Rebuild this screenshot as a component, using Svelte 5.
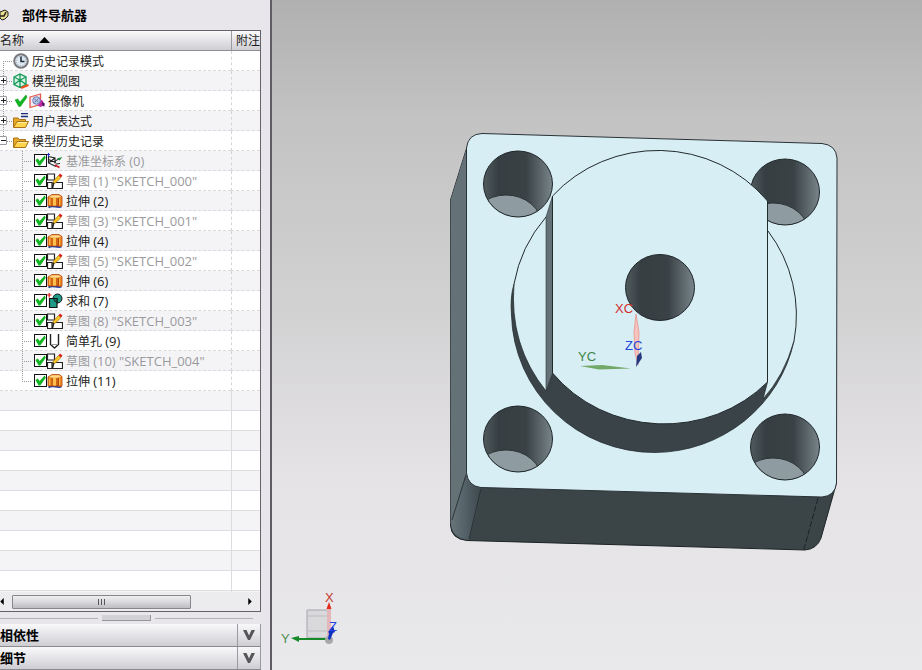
<script lang="ts">
  type Kind = "clock" | "views" | "camera" | "expressions" | "folder" | "datum" | "sketch" | "extrude" | "unite" | "hole";

  type Feature = { name: string; suffix: string; icon: Kind; dim?: boolean; checked: boolean };

  const HOLES = [
    { x: 518, y: 184 },
    { x: 785, y: 192 },
    { x: 518, y: 439 },
    { x: 785, y: 447 },
  ];

  let open = $state(true);
  let features: Feature[] = $state([
    { name: "基准坐标系", suffix: "(0)", icon: "datum", dim: true, checked: true },
    { name: "草图", suffix: '(1) "SKETCH_000"', icon: "sketch", dim: true, checked: true },
    { name: "拉伸", suffix: "(2)", icon: "extrude", checked: true },
    { name: "草图", suffix: '(3) "SKETCH_001"', icon: "sketch", dim: true, checked: true },
    { name: "拉伸", suffix: "(4)", icon: "extrude", checked: true },
    { name: "草图", suffix: '(5) "SKETCH_002"', icon: "sketch", dim: true, checked: true },
    { name: "拉伸", suffix: "(6)", icon: "extrude", checked: true },
    { name: "求和", suffix: "(7)", icon: "unite", checked: true },
    { name: "草图", suffix: '(8) "SKETCH_003"', icon: "sketch", dim: true, checked: true },
    { name: "简单孔", suffix: "(9)", icon: "hole", checked: true },
    { name: "草图", suffix: '(10) "SKETCH_004"', icon: "sketch", dim: true, checked: true },
    { name: "拉伸", suffix: "(11)", icon: "extrude", checked: true },
  ]);

  const roots: { name: string; icon: Kind; expander?: boolean; active?: boolean }[] = [
    { name: "历史记录模式", icon: "clock" },
    { name: "模型视图", icon: "views", expander: true },
    { name: "摄像机", icon: "camera", expander: true, active: true },
    { name: "用户表达式", icon: "expressions", expander: true },
  ];
</script>

{#snippet icon(kind: Kind)}
  <svg class="icon" viewBox="0 0 16 16" aria-hidden="true">
    {#if kind === "clock"}
      <circle cx="8" cy="8" r="6.800" fill="#dfe9f2" stroke="#77777c" stroke-width="2" />
      <circle cx="8" cy="8" r="4.800" fill="none" stroke="#8f9aa5" stroke-dasharray="1 1.5" />
      <path d="M8 3.500v5h3.500" fill="none" stroke="#1c2a3a" stroke-width="1.500" />
    {:else if kind === "views"}
      <path d="M1 4 7 1l6 3v7.500l-6 3-6-3z M1 4l6 3 6-3 M7 1v13.500 M1 11.500l6-4.500 6 4.500" fill="#d4f2e2" stroke="#159a58" stroke-width="1.300" />
      <path d="M8 15l7.500-3" stroke="#f0501c" stroke-width="2" />
    {:else if kind === "camera"}
      <path d="M1 4 11.500 1v10.500L1 14.500z" fill="#f6e8f0" stroke="#e25a4c" stroke-width="1.300" />
      <path d="M11 6l3 2 1 3.500-3 2.500-3-1z" fill="#c02aa4" />
      <path d="M13 9l2.800 1.500-.5 3-1.800-.5z" fill="#4a1a60" />
      <circle cx="7.500" cy="7.500" r="3.800" fill="#b6c6e6" stroke="#7080b4" />
      <path d="M5.500 6l4 3M9.500 5.500l-4 4" stroke="#6c78b0" />
    {:else if kind === "expressions" || kind === "folder"}
      <path d="M.5 14V5H5l1.500 1.500h6V9" fill="#e7a92a" stroke="#a9721a" />
      <path d="M.5 14.500 4 8.500h11.500l-3 6z" fill="#ffd44c" stroke="#a9721a" />
      <path d="M5 9.500h9" stroke="#fff0a8" />
      {#if kind === "expressions"}
        <path d="M8 .5h7M8 3.500h7" stroke="#1d2c78" stroke-width="1.300" />
      {/if}
    {:else if kind === "datum"}
      <path d="M1.500 1v9l7.500 3.500M1.500 3.500 8 5v5.500M1.500 10 8 5M1.500 6.500l7.500 3" fill="none" stroke="#222" stroke-width="1.100" />
      <path d="M8 8l4-2" stroke="#222" />
      <path d="M10 5.500 15.500 4l-3 3.500z" fill="#128a36" />
      <path d="M9 11l4-.5" stroke="#222" />
      <path d="M8 12l4.500 2.500" stroke="#cc1c1c" stroke-width="1.800" />
      <path d="M0 1.500h3M1.500 0v4" stroke="#2030c8" />
    {:else if kind === "sketch"}
      <path d="M.5 1h7v6h-7zM.5 9.500h4.500v6H.5zM7 9.500h8.500v6H5.500z" fill="#fff" stroke="#222" stroke-width="1.200" />
      <path d="M5.500 11 6.500 8 11.500 2.500l2.500 2L8.500 10z" fill="#ffc81e" stroke="#8a5a10" stroke-width=".6" />
      <path d="M11.500 2.500 13 .500l2.500 2L14 4.500z" fill="#d8201c" />
      <path d="M5 11.500l.8-2.500 1.700 1.500z" fill="#222" />
    {:else if kind === "extrude"}
      <path d="M1.500 14.500c4-3 9 1 13-1" fill="none" stroke="#1c3fa8" stroke-width="1.800" />
      <path d="M1 4 5 1.500h7l3 2V13l-3.500.5V4.500v8l-1.500.5H5.500L1 13z" fill="#f08a20" stroke="#b0440c" stroke-width=".8" />
      <path d="M5 4v9M10 4.500V13" stroke="#b0440c" />
      <path d="M6 5h3v7.500H6z" fill="#ffc050" />
      <path d="M2 4 5 2.200h7l2 1.500-3 1H5z" fill="#ffd98a" />
      <path d="M2.500 6v6M12.500 5.500V12" stroke="#ffb648" />
    {:else if kind === "unite"}
      <circle cx="10.500" cy="5.500" r="4.500" fill="#1f9c88" stroke="#111" />
      <path d="M2.500 5.500H10v9H2.500z" fill="#1f9c88" stroke="#111" stroke-width="1.200" />
      <path d="M6.500 5.500H10v4a4.500 4.500 0 0 1-3.500-4z" fill="#157465" stroke="#111" stroke-width=".8" />
      <path d="M0 2h4.500M2.200 0v4.500" stroke="#e01818" stroke-width="1.200" />
    {:else}
      <path d="M3.500 1v10.500L7.500 15l4-3.500V1" fill="none" stroke="#222" stroke-width="1.400" />
      <path d="M4 11.500h7" stroke="#999" />
    {/if}
  </svg>
{/snippet}

{#snippet tick()}
  <svg class="tick" viewBox="0 0 12 12" aria-hidden="true">
    <path d="M.5 5.500 3 4.500 5 7.500 10.500 1l1 2L5.500 11.500H4z" fill="#12b424" stroke="#12a422" stroke-width=".6" />
  </svg>
{/snippet}

<main>
  <aside>
    <h1>
      <svg class="pin" viewBox="0 0 9 12" aria-hidden="true">
        <path d="M0 3l5-2 3 2v4l-3 3-3 1-2-2z" fill="#e8dc8c" stroke="#222" />
        <path d="M0 7h4l2-4" fill="none" stroke="#222" stroke-width="1.500" />
      </svg>
      部件导航器
    </h1>

    <div class="tree">
      <table>
        <thead>
          <tr>
            <th class="name">
              名称
              <svg class="sort" viewBox="0 0 11 6" aria-hidden="true"><path d="M5.500 0 11 6H0z" /></svg>
            </th>
            <th class="note">附注</th>
          </tr>
        </thead>
        <tbody>
          {#each roots as item}
            <tr>
              <td>
                <div class="node root">
                  <span class="branch">
                    {#if item.expander}
                      <button class="expander" aria-label="展开 {item.name}">
                        <svg viewBox="0 0 7 7"><path d="M1 3.500h5M3.500 1v5" /></svg>
                      </button>
                    {/if}
                  </span>
                  {#if item.active}{@render tick()}{/if}
                  {@render icon(item.icon)}
                  <span class="label">{item.name}</span>
                </div>
              </td>
              <td></td>
            </tr>
          {/each}
          <tr>
            <td>
              <div class="node root last">
                <span class="branch">
                  <button class="expander" aria-label="模型历史记录" aria-expanded={open} onclick={() => (open = !open)}>
                    <svg viewBox="0 0 7 7"><path d={open ? "M1 3.500h5" : "M1 3.500h5M3.500 1v5"} /></svg>
                  </button>
                </span>
                {@render icon("folder")}
                <span class="label">模型历史记录</span>
              </div>
            </td>
            <td></td>
          </tr>
          {#if open}
            {#each features as feature, i}
              <tr>
                <td>
                  <label class="node child" class:last={i === features.length - 1} class:dim={feature.dim}>
                    <span class="branch"></span>
                    <input type="checkbox" bind:checked={feature.checked} />
                    {@render icon(feature.icon)}
                    <span class="label">{feature.name} <span class="suffix">{feature.suffix}</span></span>
                  </label>
                </td>
                <td></td>
              </tr>
            {/each}
          {/if}
        </tbody>
      </table>

      <div class="filler"></div>

      <div class="scrollbar">
        <button aria-label="向左滚动"><svg viewBox="0 0 4 8"><path d="M4 0v8L0 4z" /></svg></button>
        <div class="track"><div class="thumb"><i></i><i></i><i></i></div></div>
        <button aria-label="向右滚动"><svg viewBox="0 0 4 8"><path d="M0 0v8l4-4z" /></svg></button>
      </div>
    </div>

    <div class="splitter"><span></span><b></b><span></span></div>

    {#each ["相依性", "细节"] as title}
      <button class="section">
        <span class="title">{title}</span>
        <span class="arrow">
          <svg viewBox="0 0 12 10" aria-hidden="true"><path d="M0 0h3.500L6 5.500 8.500 0H12L7 10H5z" /></svg>
        </span>
      </button>
    {/each}
  </aside>

  <section class="viewport">
    <svg viewBox="272 0 650 670" role="img" aria-label="零件模型">
      <defs>
        <linearGradient id="bore">
          <stop offset="0" stop-color="#505b5e" />
          <stop offset=".22" stop-color="#363e42" />
          <stop offset=".62" stop-color="#3a4246" />
          <stop offset="1" stop-color="#78858a" />
        </linearGradient>
        <linearGradient id="corner">
          <stop offset="0" stop-color="#68757a" />
          <stop offset=".4" stop-color="#56636a" />
          <stop offset="1" stop-color="#3b4549" />
        </linearGradient>
        <clipPath id="rim"><ellipse rx="34" ry="33" /></clipPath>
      </defs>

      <!-- plate sides -->
      <path d="M467 147 450.500 200V525Q451 539 467 540.500L805 550Q817 549 821 538L836.500 483 820 400H467z" fill="#3b4548" stroke="#1d2326" />
      <path d="M467 147 450.500 200V525L466.500 472z" fill="#647176" />
      <path d="M466.500 472 451 522Q451 538 469 540L483 488z" fill="url(#corner)" />
      <path d="M466 475 452 520M481 489 469 539" fill="none" stroke="#22292c" stroke-width=".8" />
      <path d="M818 498 804 549" fill="none" stroke="#1b2123" stroke-dasharray="6 2" />

      <!-- plate face -->
      <path d="M466.500 148Q468 134 482 133.500L822 143.500Q836 145 837 158L836.500 483Q835 496 822 497L481 487.500Q468 486 466.500 473z" fill="#d8eef5" stroke="#2a3236" />

      {#each HOLES as hole}
        <g transform="translate({hole.x} {hole.y})">
          <ellipse rx="34.500" ry="33" fill="url(#bore)" />
          <g clip-path="url(#rim)">
            <ellipse cx="-12" cy="42" rx="36" ry="31" fill="#8e9ba0" stroke="#2c3437" />
          </g>
          <ellipse rx="34.500" ry="33" fill="none" stroke="#1f2629" />
        </g>
      {/each}

      <!-- boss -->
      <path d="M546 217A143 141 0 0 0 514 284M768 231A143 141 0 0 1 794 341" fill="none" stroke="#222a2d" />
      <path d="M514 284Q510 297 511.500 315A143 141 0 0 0 655 452.500A143 141 0 0 0 794 341Q784 376 763 399L767.500 382 552.500 373 546 391Q509 345 514 284z" fill="#3a4347" stroke="#252d30" stroke-width=".8" />
      <path d="M552.500 196 546 217V391L552.500 373z" fill="#647176" stroke="#2a3236" stroke-width=".6" />
      <path d="M552.500 196A141 136 0 0 1 767.500 201V382A141 131 0 0 1 552.500 373z" fill="#d8eef5" stroke="#222a2d" />
      <ellipse cx="660" cy="287.500" rx="34.500" ry="33" fill="url(#bore)" stroke="#1f2629" />

      <!-- work coordinate system -->
      <path d="M636 314l3 18-1 33-3-12-1-21z" fill="#f6c4be" stroke="#e58a84" stroke-width=".7" />
      <path d="M580 366l22-1 29 3.500-32 1z" fill="#72a868" />
      <path d="M636 367l1-11 4-4 1 6z" fill="#273a80" />
      <text x="615" y="313" fill="#d22f2f">XC</text>
      <text x="625" y="350" fill="#2447e0">ZC</text>
      <text x="578" y="361" fill="#3d8546">YC</text>

      <!-- view triad -->
      <path d="M307 610h23v28h-23z" fill="#d9d9dc" stroke="#a4a4aa" />
      <path d="M307 616h20M307 631h20" fill="none" stroke="#bbbbc1" />
      <path d="M327 609h4v29h-4z" fill="#e4b8b8" />
      <path d="M329 602l2.500 7h-5z" fill="#e02c1c" />
      <path d="M291 638l8-2v2h28v2h-28v2z" fill="#168a28" />
      <circle cx="329" cy="640" r="4" fill="#a8a8ac" />
      <path d="M328 639l1-6-1-1 5-6 2 6-2 1-3 7z" fill="#1030c0" />
      <text x="325" y="602" fill="#c83c30">X</text>
      <text x="281" y="643" fill="#4c8c50">Y</text>
      <text x="329" y="631" fill="#2447e0">Z</text>
    </svg>
  </section>
</main>

<style>
  :global(body) {
    margin: 0;
  }

  main {
    display: flex;
    min-height: 100vh;
    font: 12px/20px "Open Sans", "Noto Sans CJK SC", sans-serif;
    color: #1c1c20;
  }

  aside {
    display: flex;
    flex-direction: column;
    flex: 0 0 272px;
    box-sizing: border-box;
    padding-right: 9px;
    border-right: 2px solid #625d64;
    background: #e9e6eb;
    overflow: hidden;
  }

  button {
    padding: 0;
    border: 0;
    background: none;
    font: inherit;
    color: inherit;
  }

  h1 {
    display: flex;
    align-items: center;
    gap: 13px;
    height: 30px;
    margin: 0;
    font-size: 13px;
    font-weight: bold;
    color: #000;
  }

  .pin {
    width: 9px;
    height: 12px;
  }

  .tree {
    display: flex;
    flex-direction: column;
    flex: 1;
    border: 1px solid #66626a;
    border-left: 0;
    background: #fff;
  }

  table {
    width: 100%;
    table-layout: fixed;
    border-collapse: separate;
    border-spacing: 0;
  }

  th {
    height: 20px;
    box-sizing: border-box;
    padding: 0;
    border-bottom: 1px solid #8e8e94;
    background: linear-gradient(#fafafa, #e4e4e8 50%, #cfcfd3);
    font-weight: normal;
    text-align: left;
    line-height: 19px;
    overflow: hidden;
    white-space: nowrap;
  }

  .note {
    width: 29px;
    box-sizing: border-box;
    padding-left: 4px;
    border-left: 1px solid #9a9aa0;
  }

  .sort {
    width: 11px;
    height: 6px;
    margin-left: 12px;
    vertical-align: 2px;
  }

  td {
    height: 20px;
    box-sizing: border-box;
    padding: 0;
    border-bottom: 1px dashed #d9d9dd;
  }

  td + td {
    border-left: 1px dashed #d4d4d8;
  }

  tbody tr:nth-child(even) {
    background: #f4f4f7;
  }

  .node {
    display: flex;
    align-items: center;
    height: 19px;
    line-height: 19px;
    white-space: nowrap;
  }

  .branch {
    display: flex;
    align-items: center;
    align-self: stretch;
    flex: none;
    background:
      repeating-linear-gradient(90deg, #999 0 1px, transparent 1px 2px) 3px 10px / 100% 1px no-repeat,
      repeating-linear-gradient(#999 0 1px, transparent 1px 2px) 3px 0 / 1px 100% no-repeat;
  }

  .root .branch {
    width: 13px;
  }

  tr:first-child .branch {
    background-position: 3px 10px, 3px 10px;
  }

  .child .branch {
    width: 9px;
    margin: 0 3px 0 22px;
    background-position: 0 10px, 0 0;
  }

  .last .branch {
    background-size: 100% 1px, 1px 50%;
  }

  .expander {
    width: 8px;
    height: 9px;
    box-sizing: border-box;
    margin-left: -1px;
    border: 1px solid #9a9aa0;
    border-radius: 1px;
    background: #fff;
    line-height: 0;
  }

  .expander svg {
    width: 7px;
    height: 7px;
    fill: none;
    stroke: #222;
  }

  .icon {
    flex: none;
    width: 16px;
    height: 16px;
  }

  .tick {
    flex: none;
    width: 14px;
    height: 13px;
    margin: 0 1px;
  }

  .label {
    padding-top: 1px;
    margin-left: 3px;
  }

  .suffix {
    font-size: 13px;
  }

  .dim .label {
    color: #9a9a9c;
  }

  input[type="checkbox"] {
    appearance: none;
    flex: none;
    width: 13px;
    height: 13px;
    box-sizing: border-box;
    margin: 0;
    border: 1px solid #111;
    background: #fff;
  }

  input:checked::before {
    content: "";
    display: block;
    width: 11px;
    height: 11px;
    background: #12b424;
    clip-path: polygon(4% 45%, 26% 32%, 42% 54%, 88% 4%, 98% 24%, 48% 96%, 32% 96%);
  }

  .filler {
    flex: 1;
    min-height: 20px;
    background:
      linear-gradient(#dcdce0, #dcdce0) right 28px top / 1px 100% no-repeat,
      repeating-linear-gradient(#f4f4f7 0 19px, #dedee2 19px 20px, #fff 20px 39px, #dedee2 39px 40px);
  }

  .scrollbar {
    display: flex;
    align-items: center;
    height: 19px;
    background: #ececef;
  }

  .scrollbar button {
    display: flex;
    flex: none;
    width: 12px;
  }

  .scrollbar button svg {
    width: 4px;
    height: 7px;
  }

  .track {
    flex: 1;
  }

  .thumb {
    display: flex;
    align-items: center;
    justify-content: center;
    gap: 2px;
    width: 76%;
    height: 14px;
    box-sizing: border-box;
    border: 1px solid #86868c;
    border-radius: 1px;
    background: linear-gradient(#eee, #dcdce0 45%, #bdbdc2);
  }

  .thumb i {
    width: 1px;
    height: 6px;
    background: #55555a;
  }

  .splitter {
    display: flex;
    align-items: center;
    gap: 4px;
    height: 12px;
    padding-right: 8px;
  }

  .splitter span {
    flex: 1;
    height: 1px;
    background: #b0b0b5;
  }

  .splitter b {
    width: 49px;
    height: 6px;
    box-sizing: border-box;
    border: solid #96969c;
    border-width: 0 1px 1px 0;
    background: #d2d2d6;
  }

  .section {
    display: flex;
    width: 100%;
    height: 23px;
    border-bottom: 1px solid #8a8a90;
    background: linear-gradient(#f8f8fa, #e4e4e8 50%, #cdcdd2);
    font-size: 13px;
    font-weight: bold;
    line-height: 22px;
    text-align: left;
    color: #000;
  }

  .title {
    flex: 1;
  }

  .arrow {
    display: flex;
    align-items: center;
    justify-content: center;
    width: 22px;
    border: solid #9a9aa0;
    border-width: 0 1px;
  }

  .arrow svg {
    width: 12px;
    height: 10px;
    fill: #57545a;
  }

  .viewport {
    display: grid;
    flex: 1;
    min-width: 0;
    background: linear-gradient(#b0b0b0, #c4c3c3 18%, #d2d1d2 45%, #e5e3e6 72%, #e9e8eb);
  }

  .viewport svg {
    display: block;
    width: 100%;
    height: 100%;
  }

  .viewport text {
    font: 13px "Liberation Sans", sans-serif;
  }
</style>
